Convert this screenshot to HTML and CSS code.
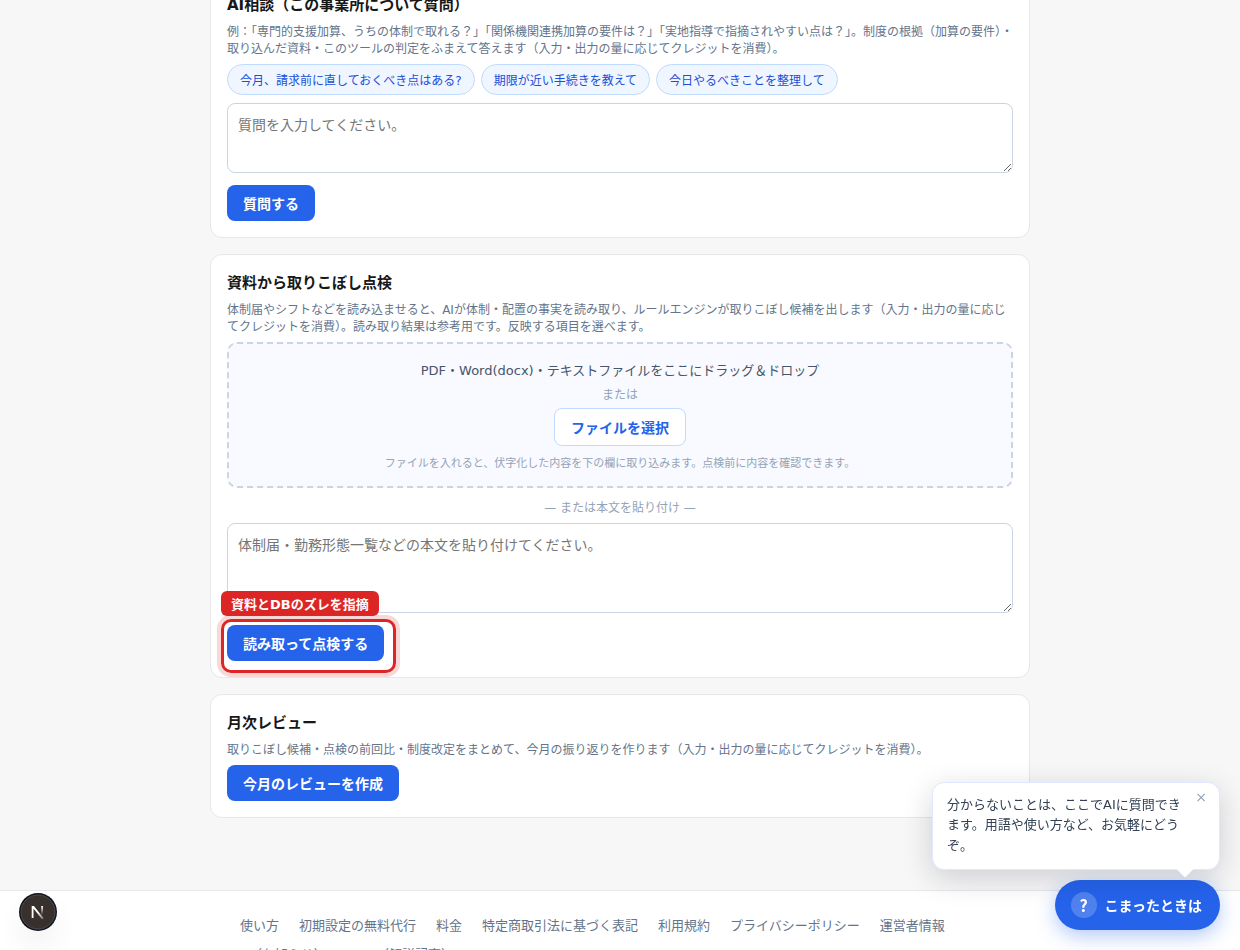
FILE: index.html
```html
<!DOCTYPE html>
<html lang="ja">
<head>
<meta charset="utf-8">
<meta name="viewport" content="width=device-width, initial-scale=1">
<title>AI相談・点検</title>
<link rel="stylesheet" href="styles.css">
</head>
<body>
<main class="page">
  <section class="card">
    <h2 class="card-title">AI相談（この事業所について質問）</h2>
    <p class="card-lead">例：「専門的支援加算、うちの体制で取れる？」「関係機関連携加算の要件は？」「実地指導で指摘されやすい点は？」。制度の根拠（加算の要件）・取り込んだ資料・このツールの判定をふまえて答えます（入力・出力の量に応じてクレジットを消費）。</p>
    <div class="chips">
      <button type="button" class="chip">今月、請求前に直しておくべき点はある?</button>
      <button type="button" class="chip">期限が近い手続きを教えて</button>
      <button type="button" class="chip">今日やるべきことを整理して</button>
    </div>
    <textarea class="field field-question" aria-label="質問" placeholder="質問を入力してください。"></textarea>
    <div class="actions"><button type="button" class="btn">質問する</button></div>
  </section>

  <section class="card">
    <h2 class="card-title">資料から取りこぼし点検</h2>
    <p class="card-lead">体制届やシフトなどを読み込ませると、AIが体制・配置の事実を読み取り、ルールエンジンが取りこぼし候補を出します（入力・出力の量に応じてクレジットを消費）。読み取り結果は参考用です。反映する項目を選べます。</p>
    <div class="dropzone">
      <p class="drop-text">PDF・Word(docx)・テキストファイルをここにドラッグ＆ドロップ</p>
      <p class="drop-or">または</p>
      <button type="button" class="btn btn-outline">ファイルを選択</button>
      <p class="drop-hint">ファイルを入れると、伏字化した内容を下の欄に取り込みます。点検前に内容を確認できます。</p>
    </div>
    <p class="divider-text">— または本文を貼り付け —</p>
    <textarea class="field field-body" aria-label="本文" placeholder="体制届・勤務形態一覧などの本文を貼り付けてください。"></textarea>
    <div class="actions">
      <div class="marked">
        <button type="button" class="btn">読み取って点検する</button>
        <span class="mark-frame"></span>
        <span class="mark-label">資料とDBのズレを指摘</span>
      </div>
    </div>
  </section>

  <section class="card">
    <h2 class="card-title">月次レビュー</h2>
    <p class="card-lead">取りこぼし候補・点検の前回比・制度改定をまとめて、今月の振り返りを作ります（入力・出力の量に応じてクレジットを消費）。</p>
    <button type="button" class="btn">今月のレビューを作成</button>
  </section>
</main>

<footer class="footer">
  <nav class="footer-links">
    <a href="#">使い方</a>
    <a href="#">初期設定の無料代行</a>
    <a href="#">料金</a>
    <a href="#">特定商取引法に基づく表記</a>
    <a href="#">利用規約</a>
    <a href="#">プライバシーポリシー</a>
    <a href="#">運営者情報</a>
    <a href="#">X（お知らせ）</a>
    <a href="#">note（解説記事）</a>
  </nav>
</footer>

<aside class="helper">
  <div class="bubble">
    <p class="bubble-text">分からないことは、ここでAIに質問できます。用語や使い方など、お気軽にどうぞ。</p>
    <button type="button" class="bubble-close" aria-label="閉じる">×</button>
  </div>
  <button type="button" class="help-btn"><span class="help-icon">?</span>こまったときは</button>
</aside>

<button type="button" class="dev-badge" aria-label="開発ツール">
  <svg width="38" height="38" viewBox="0 0 38 38" fill="none">
    <defs>
      <linearGradient id="diag" x1="19" y1="19" x2="25" y2="26" gradientUnits="userSpaceOnUse">
        <stop stop-color="#fff"/><stop offset="1" stop-color="#fff" stop-opacity="0.3"/>
      </linearGradient>
      <linearGradient id="stem" x1="23" y1="13" x2="23" y2="22" gradientUnits="userSpaceOnUse">
        <stop stop-color="#fff"/><stop offset="1" stop-color="#fff" stop-opacity="0"/>
      </linearGradient>
    </defs>
    <circle cx="19" cy="19" r="19" fill="#14151a"/>
    <circle cx="19" cy="19" r="17" fill="#38302c" stroke="#4a4d58"/>
    <path d="M12.7 13h2.2l9.8 12.2-1.7 1.1-8.5-10.7V25h-1.8z" fill="url(#diag)"/>
    <path d="M22.2 13H24v9h-1.8z" fill="url(#stem)"/>
  </svg>
</button>
</body>
</html>
```
FILE: styles.css
```css
* { box-sizing: border-box; }

html { overflow: hidden; }

body {
  margin: 0;
  background: #f7f7f7;
  color: #171717;
  font-family: "DejaVu Sans", "Noto Sans CJK JP", sans-serif;
}

h2, p { margin: 0; }

button, textarea { font-family: inherit; }

button { cursor: pointer; }

.page {
  display: flex;
  flex-direction: column;
  gap: 16px;
  max-width: 820px;
  margin: -24px auto 0;
  padding-bottom: 72px;
}

.card {
  padding: 16px;
  background: #fff;
  border: 1px solid #e5e7eb;
  border-radius: 12px;
}

.card-title {
  margin-bottom: 8px;
  font-size: 15px;
}

.card-lead {
  margin-bottom: 8px;
  color: #64748b;
  font-size: 12px;
}

.chips {
  display: flex;
  flex-wrap: wrap;
  gap: 6px;
  margin-bottom: 8px;
}

.chip {
  padding: 6px 12px;
  background: #eff6ff;
  border: 1px solid #bfdbfe;
  border-radius: 999px;
  color: #1d4ed8;
  font-size: 12px;
}

.field {
  display: block;
  width: 100%;
  padding: 10px;
  background: #fff;
  border: 1px solid #cbd5e1;
  border-radius: 8px;
  font-size: 14px;
}

.field-question { height: 70px; }

.field-body { height: 90px; }

.actions {
  display: flex;
  margin-top: 12px;
}

.btn {
  padding: 8px 16px;
  background: #2563eb;
  border: 0;
  border-radius: 8px;
  color: #fff;
  font-size: 14px;
  font-weight: 700;
}

.btn-outline {
  background: #fff;
  border: 1px solid #bfdbfe;
  color: #2563eb;
}

.dropzone {
  display: flex;
  flex-direction: column;
  align-items: center;
  gap: 6px;
  padding: 16px;
  background: #f8faff;
  border: 2px dashed #cbd5e1;
  border-radius: 10px;
  text-align: center;
}

.drop-text {
  color: #475569;
  font-size: 13px;
}

.drop-or {
  color: #94a3b8;
  font-size: 12px;
}

.drop-hint {
  padding-top: 2px;
  color: #94a3b8;
  font-size: 11px;
}

.divider-text {
  padding: 10px 0 8px;
  color: #94a3b8;
  font-size: 12px;
  text-align: center;
}

.marked {
  position: relative;
  display: flex;
}

.mark-frame {
  position: absolute;
  inset: -6px -12px -12px -6px;
  border: 3px solid #dc2626;
  border-radius: 10px;
  box-shadow: 0 0 0 4px rgba(220, 38, 38, 0.18);
  pointer-events: none;
}

.mark-label {
  position: absolute;
  left: -6px;
  bottom: 45px;
  padding: 3px 10px;
  background: #dc2626;
  border-radius: 6px;
  color: #fff;
  font-size: 13px;
  font-weight: 700;
  white-space: nowrap;
}

.footer {
  padding: 24px;
  background: #fff;
  border-top: 1px solid #e5e7eb;
}

.footer-links {
  display: flex;
  flex-wrap: wrap;
  gap: 10px 20px;
  max-width: 760px;
  margin: 0 auto;
}

.footer-links a {
  color: #64748b;
  font-size: 13px;
  text-decoration: none;
}

.helper {
  position: fixed;
  right: 20px;
  bottom: 20px;
  display: flex;
  flex-direction: column;
  align-items: flex-end;
  gap: 10px;
}

.bubble {
  position: relative;
  width: 288px;
  padding: 12px 36px 12px 14px;
  background: #fff;
  border: 1px solid #e0e7ff;
  border-radius: 12px;
  box-shadow: 0 8px 30px rgba(15, 23, 42, 0.18);
}

.bubble::after {
  content: "";
  position: absolute;
  right: 28px;
  bottom: -6px;
  width: 12px;
  height: 12px;
  background: #fff;
  transform: rotate(45deg);
}

.bubble-text {
  color: #334155;
  font-size: 13px;
  line-height: 1.6;
}

.bubble-close {
  position: absolute;
  top: 4px;
  right: 8px;
  width: 20px;
  padding: 0;
  background: none;
  border: 0;
  color: #94a3b8;
  font-size: 14px;
  line-height: 20px;
}

.help-btn {
  display: flex;
  align-items: center;
  gap: 8px;
  height: 50px;
  padding: 0 18px 0 16px;
  background: #2563eb;
  border: 0;
  border-radius: 999px;
  box-shadow: 0 6px 20px rgba(37, 99, 235, 0.35);
  color: #fff;
  font-size: 14px;
  font-weight: 700;
}

.help-icon {
  display: grid;
  place-items: center;
  width: 26px;
  height: 26px;
  background: rgba(255, 255, 255, 0.2);
  border-radius: 50%;
  font-family: "Noto Sans CJK JP", sans-serif;
  font-size: 16px;
  line-height: 24px;
}

.dev-badge {
  position: fixed;
  left: 19px;
  bottom: 19px;
  display: flex;
  padding: 0;
  background: none;
  border: 0;
  border-radius: 50%;
  box-shadow: 0 16px 32px -8px rgba(0, 0, 0, 0.16);
}
```
